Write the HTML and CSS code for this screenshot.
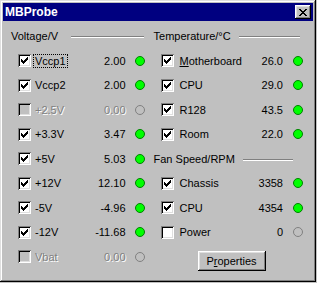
FILE: index.html
```html
<!DOCTYPE html>
<html lang="en">
<head>
    <meta charset="UTF-8">
    <title>MBProbe</title>
    <link rel="stylesheet" href="styles.css">
</head>
<body>
<svg class="defs" width="0" height="0">
    <symbol id="tick" viewBox="0 0 7 7">
        <path d="M6 0h1v1h-1zM5 1h2v1h-2zM0 2h1v1h-1zM4 2h3v1h-3zM0 3h2v1h-2zM3 3h3v1h-3zM0 4h5v1h-5zM1 5h3v1h-3zM2 6h1v1h-1z"/>
    </symbol>
</svg>

<div class="window">
    <div class="titlebar">
        <span class="title">MBProbe</span>
        <span class="close">
            <svg width="8" height="7" viewBox="0 0 8 7"><path d="M0 0h2v1h-2zM6 0h2v1h-2zM1 1h2v1h-2zM5 1h2v1h-2zM2 2h4v1h-4zM3 3h2v1h-2zM2 4h4v1h-4zM1 5h2v1h-2zM5 5h2v1h-2zM0 6h2v1h-2zM6 6h2v1h-2z"/></svg>
        </span>
    </div>

    <div class="panel">
        <div class="col left">
            <div class="head"><span>Voltage/V</span><span class="rule"></span></div>

            <div class="row">
                <span class="check"><svg><use href="#tick"/></svg></span>
                <span class="label"><span class="focus">Vccp1</span></span>
                <span class="value">2.00</span><span class="led"></span>
            </div>
            <div class="row">
                <span class="check"><svg><use href="#tick"/></svg></span>
                <span class="label">Vccp2</span>
                <span class="value">2.00</span><span class="led"></span>
            </div>
            <div class="row off">
                <span class="check"></span>
                <span class="label">+2.5V</span>
                <span class="value">0.00</span><span class="led"></span>
            </div>
            <div class="row">
                <span class="check"><svg><use href="#tick"/></svg></span>
                <span class="label">+3.3V</span>
                <span class="value">3.47</span><span class="led"></span>
            </div>
            <div class="row">
                <span class="check"><svg><use href="#tick"/></svg></span>
                <span class="label">+5V</span>
                <span class="value">5.03</span><span class="led"></span>
            </div>
            <div class="row">
                <span class="check"><svg><use href="#tick"/></svg></span>
                <span class="label">+12V</span>
                <span class="value">12.10</span><span class="led"></span>
            </div>
            <div class="row">
                <span class="check"><svg><use href="#tick"/></svg></span>
                <span class="label">-5V</span>
                <span class="value">-4.96</span><span class="led"></span>
            </div>
            <div class="row">
                <span class="check"><svg><use href="#tick"/></svg></span>
                <span class="label">-12V</span>
                <span class="value">-11.68</span><span class="led"></span>
            </div>
            <div class="row off">
                <span class="check"></span>
                <span class="label">Vbat</span>
                <span class="value">0.00</span><span class="led"></span>
            </div>
        </div>

        <div class="col right">
            <div class="head temp"><span>Temperature/°C</span><span class="rule"></span></div>

            <div class="row">
                <span class="check"><svg><use href="#tick"/></svg></span>
                <span class="label"><u>M</u>otherboard</span>
                <span class="value">26.0</span><span class="led"></span>
            </div>
            <div class="row">
                <span class="check"><svg><use href="#tick"/></svg></span>
                <span class="label">CPU</span>
                <span class="value">29.0</span><span class="led"></span>
            </div>
            <div class="row">
                <span class="check"><svg><use href="#tick"/></svg></span>
                <span class="label">R128</span>
                <span class="value">43.5</span><span class="led"></span>
            </div>
            <div class="row">
                <span class="check"><svg><use href="#tick"/></svg></span>
                <span class="label">Room</span>
                <span class="value">22.0</span><span class="led"></span>
            </div>

            <div class="head fan"><span>Fan Speed/RPM</span><span class="rule"></span></div>

            <div class="row">
                <span class="check"><svg><use href="#tick"/></svg></span>
                <span class="label">Chassis</span>
                <span class="value">3358</span><span class="led"></span>
            </div>
            <div class="row">
                <span class="check"><svg><use href="#tick"/></svg></span>
                <span class="label">CPU</span>
                <span class="value">4354</span><span class="led"></span>
            </div>
            <div class="row idle">
                <span class="check"></span>
                <span class="label">Power</span>
                <span class="value">0</span><span class="led"></span>
            </div>

            <button class="btn">P<u>r</u>operties</button>
        </div>
    </div>
</div>
</body>
</html>
```

FILE: styles.css
```css
* {
    margin: 0;
    padding: 0;
    box-sizing: border-box;
}

body {
    background-color: #c0c0c0;
    font-family: "Liberation Sans", Arial, sans-serif;
    font-size: 11px;
    color: #000;
}

.defs {
    position: absolute;
}

.window {
    width: 316px;
    height: 282px;
    padding: 3px;
    background-color: #c0c0c0;
    box-shadow: inset -1px -1px #000, inset 1px 1px #dfdfdf,
                inset -2px -2px #808080, inset 2px 2px #fff;
}

.titlebar {
    height: 18px;
    background-color: #000080;
    display: flex;
    align-items: center;
    justify-content: space-between;
    padding: 0 2px 0 2px;
}

.title {
    color: #fff;
    font-weight: bold;
    font-size: 12px;
}

.close {
    width: 16px;
    height: 14px;
    background-color: #c0c0c0;
    display: flex;
    align-items: center;
    justify-content: center;
    box-shadow: inset -1px -1px #000, inset 1px 1px #fff,
                inset -2px -2px #808080, inset 2px 2px #dfdfdf;
}

.close svg {
    fill: #000;
    margin: 1px 0 0 0;
}

.panel {
    display: flex;
    padding-top: 3px;
}

.col {
    display: flex;
    flex-direction: column;
}

.col.left {
    width: 151px;
    padding-left: 8px;
}

.col.right {
    width: 160px;
}

.head {
    height: 24.5px;
    display: flex;
    align-items: center;
}

.rule {
    flex: 1;
    height: 2px;
    border-top: 1px solid #808080;
    border-bottom: 1px solid #fff;
    margin-top: 2px;
}

.left .rule {
    margin: 2px 10px 0 13px;
}

.temp .rule {
    margin: 2px 13px 0 8px;
}

.fan .rule {
    margin: 2px 20px 0 8px;
}

.row {
    height: 24.5px;
    display: grid;
    align-items: center;
}

.left .row {
    grid-template-columns: 13px 1fr auto 10px;
    padding: 0 18px 0 7px;
}

.right .row {
    grid-template-columns: 13px 1fr auto 10px;
    padding: 0 20px 0 7px;
}

.check {
    width: 13px;
    height: 13px;
    background-color: #fff;
    padding: 3px;
    box-shadow: inset 1px 1px #808080, inset -1px -1px #fff,
                inset 2px 2px #000, inset -2px -2px #dfdfdf;
}

.check svg {
    display: block;
    width: 7px;
    height: 7px;
    fill: #000;
}

.label {
    padding-left: 4px;
    white-space: nowrap;
}

.right .label {
    padding-left: 6px;
}

.focus {
    border: 1px dotted #000;
    margin-left: -2px;
    padding: 0 1px;
}

.value {
    text-align: right;
}

.led {
    width: 10px;
    height: 10px;
    margin-left: 9px;
    border-radius: 50%;
    background-color: #00ff00;
    border: 1px solid #008000;
}

.right .led {
    margin-left: 10px;
}

.off .check {
    background-color: #c0c0c0;
}

.off .label,
.off .value {
    color: #808080;
    text-shadow: 1px 1px 0 #fff;
}

.off .led,
.idle .led {
    background-color: transparent;
    border-color: #808080;
}

.btn {
    width: 68px;
    height: 20px;
    margin: 6px 0 0 44px;
    border: none;
    background-color: #c0c0c0;
    font-family: "Liberation Sans", Arial, sans-serif;
    font-size: 11px;
    color: #000;
    box-shadow: inset -1px -1px #000, inset 1px 1px #fff,
                inset -2px -2px #808080, inset 2px 2px #dfdfdf;
}
```
